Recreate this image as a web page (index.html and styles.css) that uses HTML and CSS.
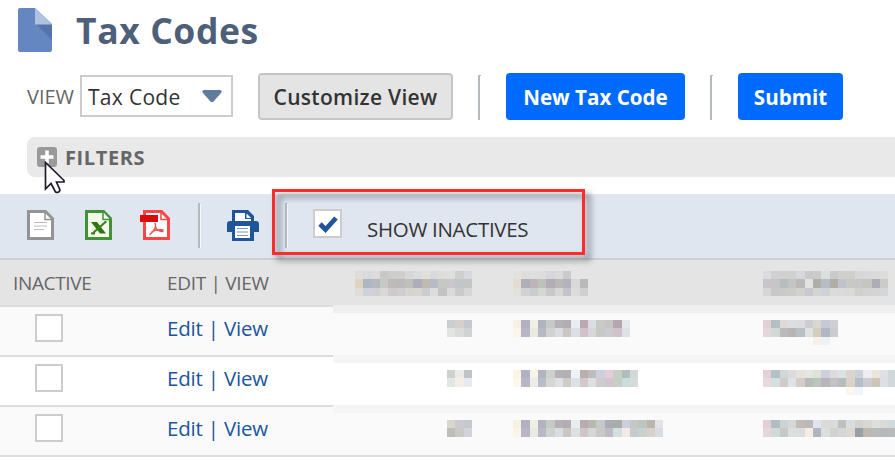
FILE: index.html
```html
<!DOCTYPE html>
<html lang="en">
<head>
<meta charset="utf-8">
<title>Tax Codes</title>
<link rel="stylesheet" href="styles.css">
</head>
<body>
<header class="page-head">
  <svg class="doc" width="34" height="44" viewBox="0 0 34 44"><path fill="#6486c1" d="M2 0H17L34 16V42Q34 44 32 44H2Q0 44 0 42V2Q0 0 2 0Z"/><path fill="#5674ab" d="M18 16H34V32Z"/><path fill="#b1c2e0" d="M17 0L34 16.500H17Z"/></svg>
  <h1><span>Tax Codes</span></h1>
</header>
<section class="controls">
  <label class="view-label">VIEW</label>
  <div class="select"><span class="t-select">Tax Code</span><svg width="20" height="13" viewBox="0 0 20 13"><path fill="#5f7b9f" d="M1.500 0H18.500Q20.500 1 19 3L12 11Q10 13.500 8 11L1 3Q-.5 1 1.500 0Z"/></svg></div>
  <button class="btn customize"><span>Customize View</span></button>
  <i class="sep"></i>
  <button class="btn primary new"><span>New Tax Code</span></button>
  <i class="sep second"></i>
  <button class="btn primary submit"><span>Submit</span></button>
</section>
<section class="filters">
  <svg width="20" height="20" viewBox="0 0 20 20"><rect width="20" height="20" rx="3" fill="#999"/><path d="M10 3.500V16.500M3.500 10H16.500" stroke="#fff" stroke-width="3.600"/></svg>
  <span>FILTERS</span>
  <svg class="cursor" width="22" height="33" viewBox="0 0 22 33"><path d="M1.500 1.500V28L7 22.500L11.500 31Q15 32.500 16 29L12.500 21H20V19.500Z" fill="#fff" stroke="#1d1d2b" stroke-width="1.700"/></svg>
</section>
<section class="toolbar">
  <svg class="ic-csv" width="27" height="30" viewBox="0 0 27 30"><path d="M1.500 1.500H18.500L25.500 8.500V28.500H1.500Z" fill="#fff" stroke="#949494" stroke-width="3"/><path d="M18 2V9.500H25" fill="none" stroke="#949494" stroke-width="1.500"/><path d="M7 12.500H20M7 16H20M7 19.500H17" stroke="#bdbdbd" stroke-width="1.200"/></svg>
  <svg class="ic-xls" width="27" height="30" viewBox="0 0 27 30"><path d="M1.500 1.500H18.500L25.500 8.500V28.500H1.500Z" fill="#f2f7e8" stroke="#43903b" stroke-width="3"/><path d="M18 2V9.500H25" fill="#fff" stroke="#43903b" stroke-width="1.500"/><path d="M6 12H12L21 23.500H15Z" fill="#2e7414"/><path d="M19.500 12H21.500M20.500 12L8 23M6 23.500H10" stroke="#3b7e20" stroke-width="2" fill="none"/></svg>
  <svg class="ic-pdf" width="30" height="30" viewBox="0 0 30 30"><path d="M4.500 1.500H21.500L28.500 8.500V28.500H4.500Z" fill="#fff" stroke="#fb4545" stroke-width="3"/><path d="M21 2V9.500H28" fill="none" stroke="#fb4545" stroke-width="1.500"/><path d="M0 5H18V12H0Z" fill="#d90b0b"/><path d="M15 13C17 17 14 21 9.500 25M15.500 17C16.500 19.500 19 21.500 23.500 21.500M11.500 22C15 19.800 19 19.500 23.500 20" fill="none" stroke="#f05050" stroke-width="1.400"/></svg>
  <i class="sep tsep"></i>
  <svg class="ic-print" width="33" height="31" viewBox="0 0 33 31"><path d="M6 0H22L28 6V11H30Q33 11 33 14V22H28V31H6V22H1V14Q1 11 4 11H6Z" fill="#20559a"/><path d="M9 3H19V9H25V11H9Z" fill="#fff"/><path d="M20.500 3.500L25 8H20.500Z" fill="#fff"/><path d="M9 16H24V28H9Z" fill="#fff"/><path d="M11 18.500H22M11 22H22M11 25.500H22" stroke="#7797c2" stroke-width="1.200"/></svg>
  <i class="sep tsep2"></i>
  <span class="check on"><svg width="20" height="18" viewBox="0 0 20 18"><path d="M2 9L7.500 14.500L18 3" fill="none" stroke="#20559a" stroke-width="4.800"/></svg></span>
  <span class="show">SHOW INACTIVES</span>
  <div class="highlight"></div>
</section>
<main class="table">
  <div class="row thead"><div class="c1"><span>INACTIVE</span></div><div class="c2"><span>EDIT | VIEW</span></div><div class="redact"><div class="c3" data-m="h0"></div><div class="c4" data-m="h1"></div><div class="c5" data-m="h2"></div></div></div>
  <div class="row odd"><div class="c1"><span class="check"></span></div><div class="c2"><span>Edit | View</span></div><div class="redact"><div class="c3" data-m="a0"></div><div class="c4" data-m="a1"></div><div class="c5" data-m="a2"></div></div></div>
  <div class="row even"><div class="c1"><span class="check"></span></div><div class="c2"><span>Edit | View</span></div><div class="redact"><div class="c3" data-m="b0"></div><div class="c4" data-m="b1"></div><div class="c5" data-m="b2"></div></div></div>
  <div class="row odd last"><div class="c1"><span class="check"></span></div><div class="c2"><span>Edit | View</span></div><div class="redact"><div class="c3" data-m="c0"></div><div class="c4" data-m="c1"></div><div class="c5" data-m="c2"></div></div></div>
</main>
<script src="mosaic.js"></script>
</body>
</html>
```
FILE: styles.css
```css
* { box-sizing: border-box; }
body { margin: 0; width: 895px; height: 460px; overflow: hidden; background: #fff; font-family: "Open Sans", sans-serif; color: #333; }
svg { display: block; flex: none; }
span, label { white-space: nowrap; }
.page-head { display: flex; height: 73px; padding: 8px 0 0 18px; }
h1 { margin: 0 0 0 24px; font-size: 35.500px; line-height: 45px; font-weight: 700; letter-spacing: .6px; color: #4d5f79; }
.controls { display: flex; height: 64px; align-items: flex-start; padding-left: 27px; }
.view-label { width: 53px; font-size: 20px; line-height: 47px; color: #666; font-weight: 400; }
.select { display: flex; align-items: center; justify-content: space-between; width: 153px; height: 42px; margin-top: 2px; padding: 1px 9px 0 6px; border: 2px solid #ccc; font-size: 21px; letter-spacing: .3px; }
.btn { height: 47px; padding: 0; border-radius: 4px; font: 600 21px/45px "Open Sans", sans-serif; }
.customize { width: 195px; margin-left: 25px; background: #e4e4e4; border: 2px solid #c6c6c6; color: #333; letter-spacing: .3px; line-height: 44px; }
.primary { border: 0; background: #006aff; color: #fff; font-weight: 700; font-size: 20.600px; line-height: 48px; }
.new { width: 179px; margin-left: 25px; }
.submit { width: 105px; margin-left: 25px; }
.sep { flex: none; width: 3px; height: 45px; border-left: 2px solid #b4babd; border-top: 1px solid #b4babd; margin: 2px 0 0 25px; }
.second { margin-left: 25px; }
.filters { position: relative; display: flex; align-items: center; height: 40px; margin-left: 27px; padding-left: 10px; background: #e9e9e9; border-radius: 8px 0 0 8px; font-size: 20px; font-weight: 700; letter-spacing: .6px; color: #666; }
.filters span { margin-left: 8px; }
.cursor { position: absolute; left: 17px; top: 24px; z-index: 2; }
.toolbar { position: relative; display: flex; align-items: flex-start; height: 66px; margin-top: 17px; padding: 16px 0 0 27px; background: #dfe6f0; border-bottom: 2px solid #ccced3; z-index: 1; }
.ic-xls { margin-left: 31px; }
.ic-pdf { margin-left: 28px; }
.tsep, .tsep2 { height: 45px; margin-top: -7px; border-right: 1px solid #f5f7fa; }
.tsep { margin-left: 28px; }
.ic-print { margin-left: 25px; }
.tsep2 { margin-left: 26px; }
.check { display: flex; width: 28px; height: 28px; border: 2px solid #ccc; background: #fff; align-items: center; justify-content: center; }
.on { margin: -1px 0 0 25px; width: 29px; height: 29px; }
.show { margin-left: 25px; font-size: 20.500px; line-height: 38px; letter-spacing: -.3px; color: #333; }
.highlight { position: absolute; left: 272px; top: -5px; width: 313px; height: 66px; border: 3px solid #ff2a2a; filter: drop-shadow(5px 5px 3px rgba(0,0,0,.5)); }
.row { display: flex; height: 50px; }
.c1, .c2 { border-bottom: 2px solid #ddd; color: #666; font-size: 20px; }
.c1 { width: 154px; }
.c2 { width: 179px; padding-left: 13px; line-height: 43px; }
.thead { height: 47px; background: #e4e4e4; }
.thead .c1 { padding-left: 13px; line-height: 46px; font-size: 19px; letter-spacing: -.35px; }
.thead .c2 { line-height: 46px; font-size: 19px; letter-spacing: -.3px; }
.odd { background: #fafafa; }
.odd .c1, .even .c1 { padding: 7px 0 0 35px; }
.odd .c2, .even .c2 { color: #20559a; font-size: 20.500px; letter-spacing: -.2px; }
.redact { flex: 1; display: flex; border-bottom: 2px solid #f5f5f5; border-top: 6px solid #f5f5f5; padding-top: 7px; }
.thead .redact { border-top: 0; border-bottom-color: #efefef; padding-top: 11px; }
.odd .redact { border-top-color: #efefef; }
.last .redact { border-top-color: #f5f5f5; border-bottom-color: #ddd; }
.c3 { width: 139px; display: flex; justify-content: flex-end; }
.c4 { width: 250px; padding-left: 41px; }
.c5 { width: 173px; padding-left: 41px; overflow: hidden; }
```
FILE: mosaic.js
```js
// Redacted values: each string is one line of blocks, "-" leaves a block empty.
const size = 8.35;
const cells = {
  h0: ["ddddda d8dadd dcdcdc c8c8c4 cccecc cecece d5d7d9 dcdcdc e0dfdb dadada dcdcd8 dededd cfcfcc d5d8de", "e1d3c2 adb7c2 b7b8bd c7c9c7 beb9bb bdb8bb bfc0ba afadbc c2bab1 b7bbc4 c6c9c3 cbc6cb c0c6ca c5c5c5", "e0ddd7 cfd1da d0d0d2 d8d8d8 cfc9cb d0cdd0 d5d5cf d8d4d2 cbcbd2 dcdcdc c3c3c1 dadada cacbc9 d5d7d6"],
  h1: ["e3e1dc dcdcdc dedede dcdcdc d7d6db dadada cacaca", "e3dccf adb0b9 bcb4b5 bcc1be b1acb5 b8b8b6 b5b2be d9d9d9 b9b9b9", "e2e0da d2d1d1 c8cbd0 d6d7d2 c9c6cc d7d7d5 c4c1ca dcdcdc d0d0d0"],
  h2: ["dcdcdb cfd0d0 d0d0cf d0d0cf d5d7d9 c9c9ca cbcbcb dce0dd cacac9 cfcfcd cfd0cc d7d7d7 d6d8d9 dadada dcdcdc", "c9c3cb c9c5c6 b7bec0 c4c4c4 bababa e2e4e4 b1ada7 b5bcc6 b1aea3 c0c2cc c6c9c6 c8c6c9 c5c6bd afacba cbcbc8", "dad5d5 c7c9c9 cacac9 cccccb d1d1ce c8c9ce d4d5d3 ced1d5 dadbda dadada d8dad7 cfcfcc d3d3d2 d5d3d3 d3d7da"],
  a0: ["caced1 d6d0cc c4c8d0", "e0e4e2 dbdbda d1d2d3"],
  b0: ["cbd0d0 ebebe8 c0c4c7", "e1e7e6 f5ede7 e5ebf1"],
  c0: ["dad6cb cbcad2 c5c8cd", "bdbdba c9cac5 d0d4da"],
  a1: ["f8f0e2 b2b1c2 f0f0e7 b2b2c1 c5cac7 b5b1b4 b1aeb3 e7edf1 bba9af d7dfe5 c9cac6 c4c6c4 b7a5af e3e8ec", "faf4e9 b6b6c7 e9eae2 b7b9c6 d0d2d0 d9dce1 cbc6c2 dae0e4 d0c2c8 d7d7d7 c8c8c6 cbcad2 d0c2ca dde1e7"],
  b1: ["fdf3e4 b2b1c3 f6f4ea b2b2c1 cbd1cf b6b1b4 b3b0b5 ecf2f5 bdadaf bdbdbc cbd0dc e5ced7 c9cec7 adbebf d2d8d6", "fff7ec b7b7c8 ecece4 b9bcca d6d6d5 dfe1e6 cfcbc7 dce3e7 d4c7ce dedfe0 d0cbcc d3c4ce c7cec8 c9dce0 d6dad9"],
  c1: ["f8f0e2 b2b1c2 f0f0e7 b2b2c1 c5cac7 b5b1b4 b1aeb3 e7edf1 bbabaf b8b8b3 c4cac8 a9abb5 aaaca6 cbcedb c6c8c6 c0c4bf b8b7ae e4e2e8", "faf4e9 b6b6c7 e9eae2 b7b9c6 d0d2d0 d9dce1 cbc6c2 dae0e4 d0c4ca d5d6d6 c9c9c8 bfbac5 d1e0e0 f1eae7 c4cbca cad0d0 d8d0ca d5dce2"],
  a2: ["e4cfd4 b1bfc2 dfd8d9 dcdddf dbdce0 cecdd0 d8d7d2 c8c9d6 cfcfd3", "e6d5db d1d9d7 bbb9b9 b9b4b1 b8c0c5 dfe3e0 d3cdbe b1b7c5 cbcbd0", "- - - - - - f7f1e9 edf2f7"],
  b2: ["e5cfd5 b3c1c6 cfd8d5 ddd9dc e5e2de e5e5e2 e0e1d6 cdcfdd dddbde dde2e4 dcd4ce ced0d9 eeebf3 eae6dc dde0e4 cfd8d9", "ebd8df d6dfdf cdccca dee3e8 d4cdc5 b8bbb7 bbc3bd b8b4be c1c2c6 b5bdbd dcd1c7 b5bdcb cecbd3 cfc5b6 dddfe7 d0d8d9", "- - - - - - - - - - fcf6ef f0f6fb"],
  c2: ["e3cfd5 b0bec2 cbd4d2 d5d8d8 c1bbb3 b7b9bc dfe3eb dadbd6 d9dbd8 bebfc0 d9dddd d2d2d0 d7d7d3 dedfda d9dbd9 d2d9dc", "e7d5dc d1dada c7c8c5 dbdedf dcddde f8ece0 aeb5c1 dbdedf d1d2ce d4d7d8 dfd7d2 999fa6 bfb8b1 b9babb b6b8b9 b8bbbc"]
};

document.querySelectorAll("[data-m]").forEach((host) => {
  const rows = cells[host.dataset.m].map((r) => r.split(" "));
  const cols = Math.max(...rows.map((r) => r.length));
  const w = cols * size;
  const h = rows.length * size;
  const rects = rows.map((r, y) => r.map((c, x) => c === "-" ? "" :
    `<rect x="${x}" y="${y}" width="1" height="1" fill="#${c}"/>`).join("")).join("");
  host.innerHTML = `<svg width="${w}" height="${h}" viewBox="0 0 ${cols} ${rows.length}" shape-rendering="crispEdges">${rects}</svg>`;
});
```
